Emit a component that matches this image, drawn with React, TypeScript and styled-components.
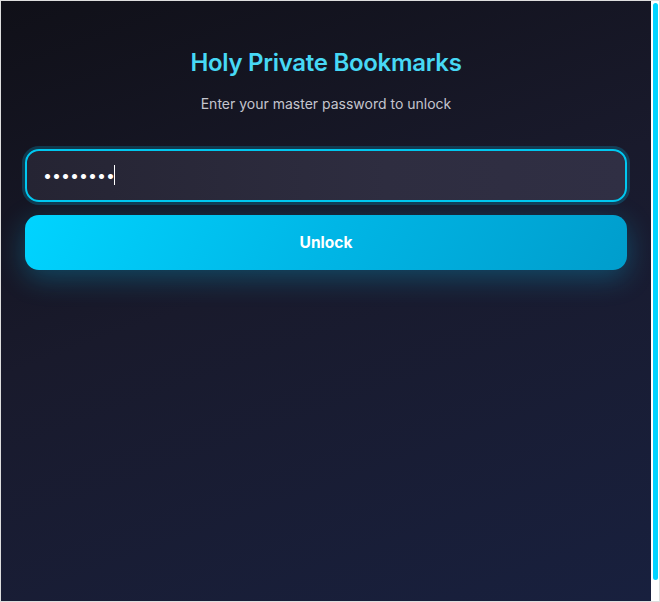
import React, { useState } from "react";
import styled, { createGlobalStyle } from "styled-components";

const GlobalStyle = createGlobalStyle`
  html, body {
    margin: 0;
    padding: 0;
    background: #ffffff;
  }
  * { box-sizing: border-box; }
`;

const Frame = styled.div`
  width: 660px;
  height: 602px;
  border: 1px solid #dedede;
  background: #ffffff;
  display: flex;
`;

const Page = styled.main`
  flex: 1;
  min-width: 0;
  height: 600px;
  overflow: hidden;
  padding: 47px 24px 24px;
  background: linear-gradient(160deg, #101018 0%, #191a2c 45%, #18203e 100%);
  font-family: Inter, "Noto Sans", sans-serif;
  display: flex;
  flex-direction: column;
`;

const ScrollTrack = styled.div`
  width: 8px;
  height: 600px;
  padding: 2px 1px 21px 2px;
  background: #ffffff;
  display: flex;
`;

const ScrollThumb = styled.div`
  flex: 1;
  background: #00d4ff;
  border-radius: 3px;
`;

const Title = styled.h1`
  margin: 0;
  text-align: center;
  font-size: 24px;
  font-weight: 600;
  line-height: 1.21;
  color: #47d8f5;
  letter-spacing: -0.3px;
`;

const Subtitle = styled.p`
  margin: 18px 0 0;
  text-align: center;
  font-size: 14px;
  line-height: 1.25;
  color: #c4c5ce;
`;

const Form = styled.form`
  margin-top: 36px;
  display: flex;
  flex-direction: column;
  gap: 13px;
`;

const InputWrap = styled.div`
  position: relative;
`;

const PasswordInput = styled.input`
  display: block;
  width: 100%;
  height: 53px;
  padding: 0 16px;
  border: 2px solid #00c8f0;
  border-radius: 14px;
  background: linear-gradient(90deg, #252433 0%, #2e2d40 60%, #302f44 100%);
  color: #ffffff;
  caret-color: transparent;
  font-family: Inter, "Noto Sans", sans-serif;
  font-size: 16px;
  outline: none;
  box-shadow: 0 0 0 3px rgba(0, 190, 235, 0.22);
`;

const CaretOverlay = styled.div`
  position: absolute;
  inset: 0;
  padding: 0 18px;
  display: flex;
  align-items: center;
  pointer-events: none;
  font-family: Inter, "Noto Sans", sans-serif;
  font-size: 16px;
`;

const Mirror = styled.span`
  visibility: hidden;
  white-space: pre;
`;

const Caret = styled.span`
  width: 1px;
  height: 20px;
  margin-left: -1px;
  background: #ffffff;
`;

const UnlockButton = styled.button`
  width: 100%;
  height: 55px;
  border: none;
  border-radius: 14px;
  background: linear-gradient(120deg, #00d4ff 0%, #00b6e6 50%, #009dcc 100%);
  color: #ffffff;
  font-family: Inter, "Noto Sans", sans-serif;
  font-size: 15.5px;
  font-weight: 700;
  cursor: pointer;
  box-shadow: 0 8px 28px rgba(0, 200, 255, 0.28);
`;

export default function App() {
  const [pw, setPw] = useState("12345678");

  return (
    <>
      <GlobalStyle />
      <Frame>
        <Page>
          <Title>Holy Private Bookmarks</Title>
          <Subtitle>Enter your master password to unlock</Subtitle>
          <Form onSubmit={(e) => e.preventDefault()}>
            <InputWrap>
              <PasswordInput
                type="password"
                value={pw}
                onChange={(e) => setPw(e.target.value)}
              />
              <CaretOverlay aria-hidden>
                <Mirror>{"\u2022".repeat(pw.length)}</Mirror>
                <Caret />
              </CaretOverlay>
            </InputWrap>
            <UnlockButton type="submit">Unlock</UnlockButton>
          </Form>
        </Page>
        <ScrollTrack>
          <ScrollThumb />
        </ScrollTrack>
      </Frame>
    </>
  );
}
